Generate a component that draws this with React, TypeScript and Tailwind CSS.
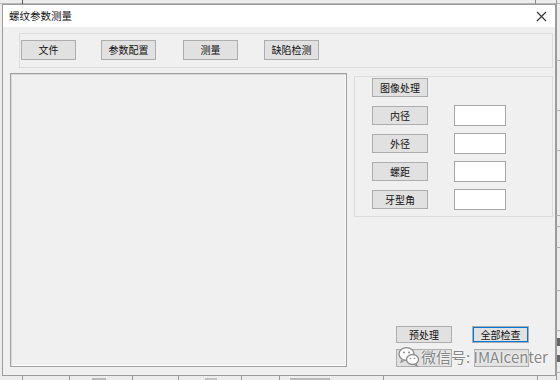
import React from "react";

const font = { fontFamily: '"Noto Sans CJK SC", "Noto Sans", sans-serif' };

function Btn({ label, w = "w-[55px]", h = "h-[20px]", extra = "" }: { label: string; w?: string; h?: string; extra?: string }) {
  return (
    <div
      className={`${w} ${h} ${extra} flex items-center justify-center bg-[#e1e1e1] border border-[#adadad] text-[10px] leading-none text-[#111]`}
    >
      {label}
    </div>
  );
}

function Field() {
  return <div className="w-[52px] h-[21px] bg-white border border-[#a8a8a8]" />;
}

function WeChat() {
  return (
    <svg width="22" height="22" viewBox="0 0 22 22">
      <ellipse cx="8.5" cy="9" rx="7.5" ry="6.3" fill="#fff" stroke="#8a8a8a" strokeWidth="1.3" />
      <path d="M4 14.5 L3.2 17 L6.5 15.2" fill="#fff" stroke="#8a8a8a" strokeWidth="1.2" />
      <circle cx="6" cy="7.5" r="1" fill="#8a8a8a" />
      <circle cx="11" cy="7.5" r="1" fill="#8a8a8a" />
      <ellipse cx="14.5" cy="14.5" rx="6" ry="5" fill="#fff" stroke="#8a8a8a" strokeWidth="1.3" />
      <path d="M18 18.5 L19 21 L16 19.3" fill="#fff" stroke="#8a8a8a" strokeWidth="1.2" />
      <circle cx="12.5" cy="13.5" r="0.8" fill="#8a8a8a" />
      <circle cx="16.5" cy="13.5" r="0.8" fill="#8a8a8a" />
    </svg>
  );
}

export default function App() {
  const bottomLines = [22, 69, 132, 178, 241, 279, 383, 537];
  const rightLines = [60, 110, 150, 215, 226, 247, 290, 330, 372];
  return (
    <div className="relative w-[560px] h-[380px] overflow-hidden bg-[#ececec]" style={font}>
      {/* background behind the window */}
      <div className="absolute left-0 top-[3px] w-[560px] h-px bg-[#b5b5b5]" />
      <div className="absolute left-[22px] top-0 w-px h-[4px] bg-[#555]" />
      <div className="absolute left-[535px] top-0 w-px h-[4px] bg-[#888]" />
      <div className="absolute left-[556px] top-0 w-px h-[380px] bg-[#9a9a9a]" />
      {rightLines.map((y) => (
        <div key={y} className="absolute left-[556px] w-[4px] h-px bg-[#b0b0b0]" style={{ top: y }} />
      ))}
      <div className="absolute left-[557px] top-[338px] w-[3px] h-[8px] bg-[#666]" />
      <div className="absolute left-[557px] top-[355px] w-[3px] h-[7px] bg-[#666]" />
      {bottomLines.map((x) => (
        <div key={x} className="absolute top-[376px] w-px h-[4px] bg-[#999]" style={{ left: x }} />
      ))}
      <div className="absolute left-[92px] top-[378px] w-[14px] h-[2px] bg-[#bbb]" />
      <div className="absolute left-[205px] top-[378px] w-[12px] h-[2px] bg-[#c4c4c4]" />
      <div className="absolute left-[290px] top-[378px] w-[40px] h-[2px] bg-[#bbb]" />

      {/* window */}
      <div className="relative ml-[2px] mt-[4px] w-[554px] h-[372px] border border-[#9c9c9c] bg-[#f0f0f0] flex flex-col">
        <div className="h-[22px] bg-white flex items-center justify-between pl-[6px] pr-[8px] shrink-0">
          <span className="text-[10.5px] text-[#111] leading-none">螺纹参数测量</span>
          <svg width="11" height="11" viewBox="0 0 11 11">
            <path d="M1 1 L10 10 M10 1 L1 10" stroke="#333" strokeWidth="1.1" />
          </svg>
        </div>

        {/* toolbar group */}
        <div className="ml-[16px] mt-[6px] w-[534px] h-[35px] border border-[#dcdcdc] flex items-start pl-[1px] pt-[6px] gap-[26px] shrink-0">
          <Btn label="文件" />
          <Btn label="参数配置" extra="ml-[-1px]" />
          <Btn label="测量" extra="ml-[1px]" />
          <Btn label="缺陷检测" />
        </div>

        {/* main row */}
        <div className="flex mt-[5px] ml-[7px] gap-[7px]">
          <div className="w-[337px] h-[294px] border border-[#a0a0a0] shadow-[inset_1px_1px_0_#dadada,inset_-1px_-1px_0_#ffffff] bg-[#f0f0f0]" />

          <div className="mt-[3px] w-[199px] h-[291px] flex flex-col">
            <div className="w-[199px] h-[141px] border border-[#dcdcdc] pl-[17px] pt-[1px] flex flex-col">
              <Btn label="图像处理" w="w-[56px]" h="h-[19px]" />
              <div className="flex flex-col gap-[7px] mt-[8px]">
                {["内径", "外径", "螺距", "牙型角"].map((t) => (
                  <div key={t} className="flex items-center gap-[26px]">
                    <Btn label={t} w="w-[56px]" h="h-[19px]" />
                    <Field />
                  </div>
                ))}
              </div>
            </div>

            <div className="mt-auto flex flex-col gap-[6px] pl-[42px] pb-[0px]">
              <div className="flex gap-[20px]">
                <Btn label="预处理" w="w-[56px]" h="h-[17px]" />
                <Btn label="全部检查" w="w-[57px]" h="h-[17px]" extra="border-[#0078d7] shadow-[inset_0_0_0_1px_#0078d7]" />
              </div>
              <div className="flex gap-[22px]">
                <Btn label="" w="w-[56px]" h="h-[18px]" />
                <Btn label="" w="w-[55px]" h="h-[18px]" />
              </div>
            </div>
          </div>
        </div>

        {/* watermark overlay */}
        <div className="absolute left-[395px] top-[340px] flex items-center gap-[1px] pointer-events-none">
          <WeChat />
          <span
            className="text-[15px] leading-none text-[#7c7c7c] opacity-90 whitespace-nowrap"
            style={{ textShadow: "0 0 2px #fff, 0 0 2px #fff" }}
          >
            微信号: IMAIcenter
          </span>
        </div>
      </div>
    </div>
  );
}
